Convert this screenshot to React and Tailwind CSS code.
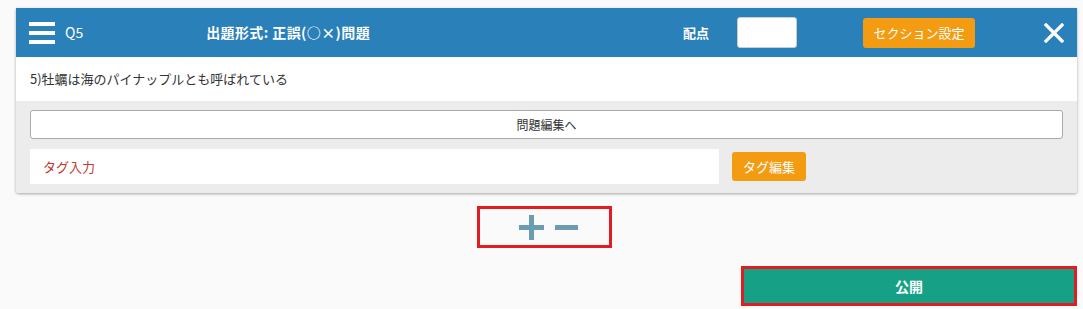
export default function App() {
  return (
    <div className="w-[1083px] h-[309px] bg-[#fafafa] pt-2 px-4 overflow-hidden" style={{ fontFamily: '"Noto Sans CJK JP", "Noto Sans", sans-serif' }}>
      {/* Question card */}
      <div className="w-[1061px] bg-white shadow-[0_1px_3px_rgba(0,0,0,0.35)] rounded-b-[3px]">
        <div className="h-[49px] bg-[#2a80b9] flex items-center text-white">
          <div className="ml-[13px] w-[26px] flex flex-col gap-[5px]">
            <span className="block h-[4px] bg-white" />
            <span className="block h-[4px] bg-white" />
            <span className="block h-[4px] bg-white" />
          </div>
          <span className="ml-[10px] text-[14px]">Q5</span>
          <span className="ml-[123px] text-[14px] font-bold tracking-[0.4px]">出題形式: 正誤(○×)問題</span>
          <span className="ml-auto text-[13px] font-bold">配点</span>
          <input className="ml-[28px] w-[60px] h-[31px] bg-white rounded-[3px] border border-[#ccc]" />
          <button className="ml-[66px] w-[112px] h-[30px] bg-[#f39c12] rounded-[3px] text-[13px] text-white">セクション設定</button>
          <svg className="ml-[69px] mr-[13px]" width="20" height="20" viewBox="0 0 20 20">
            <path d="M2 2 L18 18 M18 2 L2 18" stroke="white" strokeWidth="3.2" strokeLinecap="square" />
          </svg>
        </div>
        <div className="h-[44px] flex items-center px-[14px] text-[13px] text-[#333]">5)牡蠣は海のパイナップルとも呼ばれている</div>
        <div className="bg-[#ebeceb] px-[14px] pt-[9px] pb-[9px] rounded-b-[3px]">
          <button className="w-full h-[29px] bg-white border border-[#aaa] rounded-[3px] text-[12px] text-[#333]">問題編集へ</button>
          <div className="mt-[10px] flex items-center">
            <div className="w-[689px] h-[35px] bg-white flex items-center px-[13px] text-[13px] text-[#c0392b]">タグ入力</div>
            <button className="ml-[13px] w-[74px] h-[29px] bg-[#f39c12] rounded-[3px] text-[13px] text-white">タグ編集</button>
          </div>
        </div>
      </div>

      {/* add / remove */}
      <div className="mt-[13px] flex justify-center pl-[6px]">
        <div className="w-[135px] h-[42px] border-[3px] border-[#e31b23] flex items-center justify-center gap-[11px] pl-[8px]">
          <svg width="25" height="25" viewBox="0 0 25 25">
            <path d="M0 12.5 H25 M12.5 0 V25" stroke="#6a9cb2" strokeWidth="5" />
          </svg>
          <svg width="23" height="25" viewBox="0 0 23 25">
            <path d="M0 12.5 H23" stroke="#6a9cb2" strokeWidth="5" />
          </svg>
        </div>
      </div>

      {/* publish */}
      <div className="mt-[18px] flex justify-end -mr-[10px]">
        <button className="w-[336px] h-[40px] bg-[#16a085] border-[3px] border-[#e31b23] text-white text-[14px] font-bold">公開</button>
      </div>
    </div>
  );
}
